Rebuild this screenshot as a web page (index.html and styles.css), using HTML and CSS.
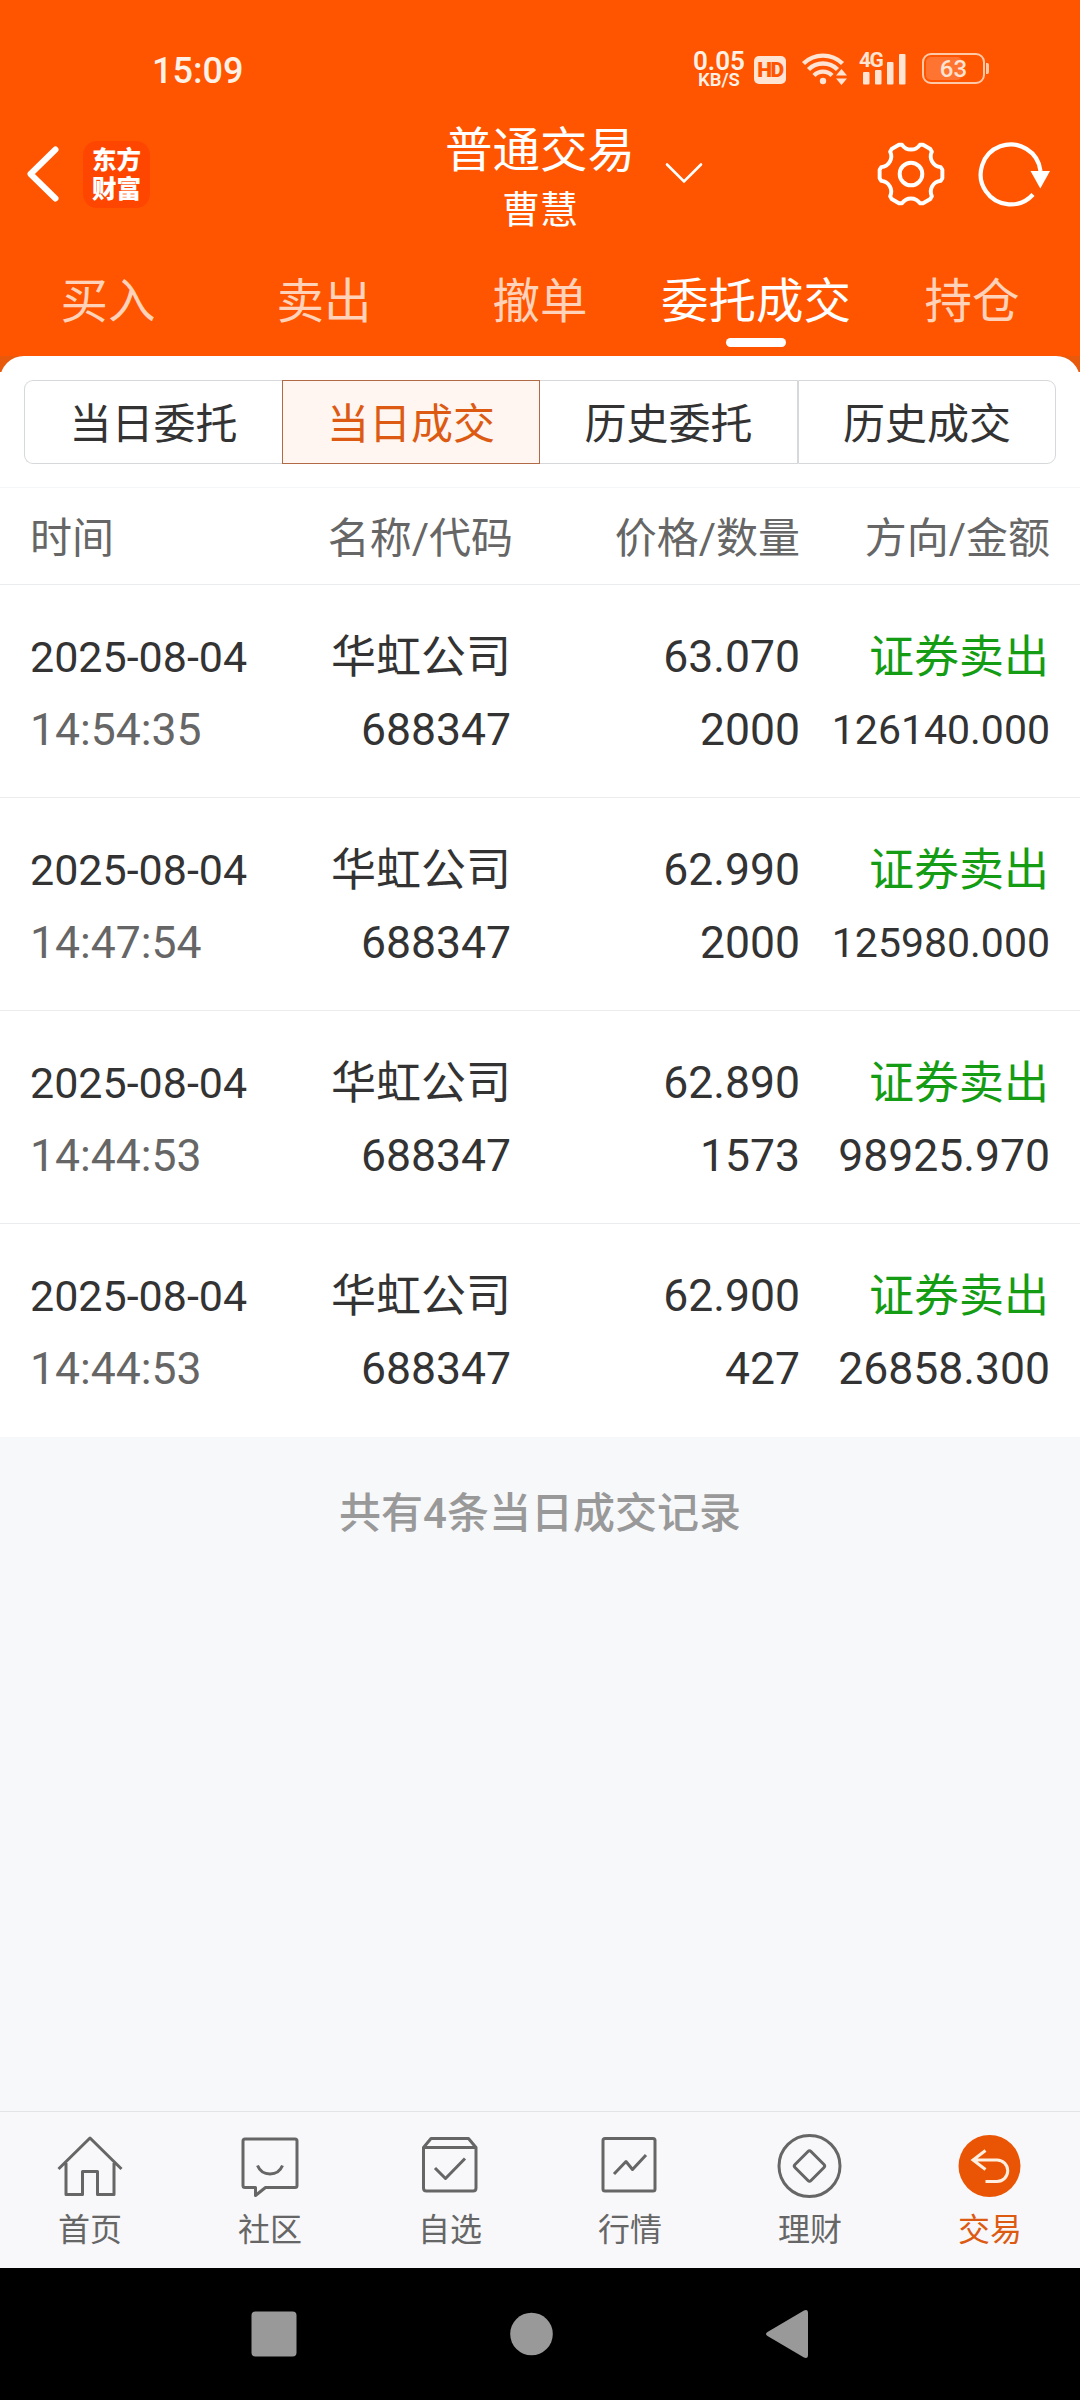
FILE: index.html
```html
<!DOCTYPE html>
<html lang="zh-CN">
<head>
<meta charset="utf-8">
<title>当日成交</title>
<link rel="stylesheet" href="styles.css">
</head>
<body>
<div class="screen">
  <header class="top">
    <div class="status">
      <span class="clock">15:09</span>
      <div class="status-icons">
        <div class="speed"><span class="speed-num">0.05</span><span class="speed-unit">KB/S</span></div>
        <span class="hd">HD</span>
        <svg class="wifi" width="46" height="36" viewBox="0 0 46 36">
          <g fill="none" stroke="#ffe3d3" stroke-width="4.400">
            <path d="M2.5 13.5A28 28 0 0 1 41.5 13.5"/>
            <path d="M7.5 19.5A20.500 20.500 0 0 1 36.500 19.5"/>
            <path d="M13 25.500A12.500 12.500 0 0 1 31 25.500"/>
          </g>
          <circle cx="22" cy="31" r="3.200" fill="#ffe3d3"/>
          <path d="M35 25.500L40.500 19L46 25.500zM35 28.500H46L40.500 35z" fill="#ffe3d3"/>
        </svg>
        <div class="signal">
          <span class="net">4G</span>
          <svg width="48" height="34" viewBox="0 0 48 34" fill="#ffe3d3">
            <rect x="4" y="21" width="6.500" height="12.500" rx="1"/><rect x="16" y="19" width="6.500" height="14.500" rx="1"/><rect x="28" y="11" width="6.500" height="22.500" rx="1"/><rect x="40" y="3" width="6.500" height="30.500" rx="1"/>
          </svg>
        </div>
        <div class="battery"><span class="battery-level"></span><span class="battery-text">63</span></div>
        <span class="battery-nub"></span>
      </div>
    </div>
    <div class="titlebar">
      <div class="title-left">
        <svg width="36" height="60" viewBox="0 0 36 60"><path d="M31.500 5.500L6.500 30L31.500 54.500" fill="none" stroke="#fff" stroke-width="6" stroke-linecap="round" stroke-linejoin="round"/></svg>
        <div class="logo"><span>东方</span><span>财富</span></div>
      </div>
      <div class="title-center">
        <span class="title">普通交易</span>
        <span class="user">曹慧</span>
      </div>
      <div class="title-right">
        <svg class="drop" width="40" height="24" viewBox="0 0 40 24"><path d="M3 3.500L20 20.500L37 3.500" fill="none" stroke="#fff" stroke-width="2.600" stroke-linecap="round"/></svg>
        <svg class="gear" width="70" height="70" viewBox="-35 -35 70 70" fill="none" stroke="#fff" stroke-width="4" stroke-linejoin="round">
          <path transform="scale(.98)" d="M30.400 7A11 11 0 0 0 21.300 22.800L19.700 25.500L12.300 29.800L9.100 29.800A11 11 0 0 0 -9.100 29.800L-12.300 29.800L-19.700 25.500L-21.300 22.800A11 11 0 0 0 -30.400 7L-32 4.300V-4.300L-30.400 -7A11 11 0 0 0 -21.300 -22.800L-19.700 -25.500L-12.300 -29.800L-9.100 -29.800A11 11 0 0 0 9.100 -29.800L12.300 -29.800L19.700 -25.500L21.300 -22.800A11 11 0 0 0 30.400 -7L32 -4.300V4.300z"/>
          <circle r="11.300"/>
        </svg>
        <svg class="refresh" width="74" height="70" viewBox="-34 -35 74 70"><path d="M22 20.500A30 30 0 1 1 29.500 -3" fill="none" stroke="#fff" stroke-width="4.200"/><path d="M19.500 -3H39L29.300 14.500z" fill="#fff"/></svg>
      </div>
    </div>
    <nav class="tabs">
      <span class="tab">买入</span>
      <span class="tab">卖出</span>
      <span class="tab">撤单</span>
      <span class="tab tab-on">委托成交</span>
      <span class="tab">持仓</span>
    </nav>
  </header>

  <main class="sheet-back">
    <section class="sheet">
      <div class="segments">
        <span class="seg seg-first">当日委托</span>
        <span class="seg seg-on">当日成交</span>
        <span class="seg seg-mid">历史委托</span>
        <span class="seg seg-last">历史成交</span>
      </div>
      <div class="cols head"><span>时间</span><span>名称/代码</span><span>价格/数量</span><span>方向/金额</span></div>
      <div class="cols row">
        <span class="date">2025-08-04</span><span class="name">华虹公司</span><span>63.070</span><span class="sell">证券卖出</span>
        <span class="time">14:54:35</span><span>688347</span><span>2000</span><span class="long">126140.000</span>
      </div>
      <div class="cols row">
        <span class="date">2025-08-04</span><span class="name">华虹公司</span><span>62.990</span><span class="sell">证券卖出</span>
        <span class="time">14:47:54</span><span>688347</span><span>2000</span><span class="long">125980.000</span>
      </div>
      <div class="cols row">
        <span class="date">2025-08-04</span><span class="name">华虹公司</span><span>62.890</span><span class="sell">证券卖出</span>
        <span class="time">14:44:53</span><span>688347</span><span>1573</span><span>98925.970</span>
      </div>
      <div class="cols row">
        <span class="date">2025-08-04</span><span class="name">华虹公司</span><span>62.900</span><span class="sell">证券卖出</span>
        <span class="time">14:44:53</span><span>688347</span><span>427</span><span>26858.300</span>
      </div>
    </section>
  </main>
  <p class="summary">共有4条当日成交记录</p>

  <nav class="bottom">
    <div class="item">
      <svg width="70" height="70" viewBox="0 0 70 70"><path d="M3.500 37L35 6L66.500 37M11 31V62.500H27.500V39.500H42.500V62.500H59V31"/></svg>
      <span>首页</span>
    </div>
    <div class="item">
      <svg width="70" height="70" viewBox="0 0 70 70"><path d="M10 7H60Q62 7 62 9V53.500Q62 55.500 60 55.500H30.500L20.500 63.500V55.500H10Q8 55.500 8 53.500V9Q8 7 10 7zM22.500 33.500Q26 42 35 42T47.500 33.500"/></svg>
      <span>社区</span>
    </div>
    <div class="item">
      <svg width="70" height="70" viewBox="0 0 70 70"><path d="M8.500 15.500L16 6.500H53.500L61 15.500V56Q61 59 58 59H11.500Q8.500 59 8.500 56zM8.500 15.500H61M20 36L30.500 46.500L50 26.500"/></svg>
      <span>自选</span>
    </div>
    <div class="item">
      <svg width="70" height="70" viewBox="0 0 70 70"><path d="M10 6.500H58Q60 6.500 60 8.500V57Q60 59 58 59H10Q8 59 8 57V8.500Q8 6.500 10 6.500zM19 42L31 29.500L37.500 37.500L51 23"/></svg>
      <span>行情</span>
    </div>
    <div class="item">
      <svg width="70" height="70" viewBox="0 0 70 70"><circle cx="34.500" cy="34" r="30.500"/><path d="M33 19.500Q34.500 18 36 19.500L49 32.500Q50.500 34 49 35.500L36 48.500Q34.500 50 33 48.500L20 35.500Q18.500 34 20 32.500z"/></svg>
      <span>理财</span>
    </div>
    <div class="item item-on">
      <svg width="70" height="70" viewBox="0 0 70 70"><circle class="disc" cx="34.500" cy="34" r="31"/><path class="arrow" d="M30.500 18.500L18 28L30.500 37.500M18 28H42A10.500 10.500 0 0 1 42 49.500H30.500"/></svg>
      <span>交易</span>
    </div>
  </nav>

  <div class="sysnav">
    <svg width="60" height="60" viewBox="0 0 60 60"><rect x="7.500" y="7.500" width="45" height="45" rx="4"/></svg>
    <svg width="60" height="60" viewBox="0 0 60 60"><circle cx="30.500" cy="30" r="21.300"/></svg>
    <svg width="60" height="60" viewBox="0 0 60 60"><path d="M9.500 28Q6.500 30 9.500 32L46 53.500Q50 55 50 51V9Q50 5 46 6.500z"/></svg>
  </div>
</div>
</body>
</html>
```
FILE: styles.css
```css
* { box-sizing: border-box; }
body {
  margin: 0;
  font-family: Roboto, "Noto Sans CJK SC", sans-serif;
  color: #333;
}
.screen {
  width: 1080px;
  height: 2400px;
  display: flex;
  flex-direction: column;
  background: #f7f8fa;
  overflow: hidden;
}
svg { display: block; flex: none; }

/* header */
.top {
  height: 356px;
  background: #ff5500;
  color: #fff;
  display: flex;
  flex-direction: column;
}
.status {
  height: 120px;
  padding: 50px 91px 0 152px;
  display: flex;
  justify-content: space-between;
  align-items: flex-start;
}
.clock { font-size: 36px; font-weight: 500; line-height: 43px; color: #fff1e6; }
.status-icons { display: flex; height: 40px; }
.speed {
  width: 52px;
  margin-right: 9px;
  display: flex;
  flex-direction: column;
  align-items: center;
  color: #fff1e6;
}
.speed-num { font-size: 26px; line-height: 22px; font-weight: 600; }
.speed-unit { font-size: 18.500px; line-height: 17px; font-weight: 600; }
.hd {
  width: 32px;
  height: 28px;
  margin: 6px 16px 0 0;
  border-radius: 5px;
  background: #ffe3d3;
  color: #ff5500;
  font-size: 21px;
  font-weight: 900;
  line-height: 28px;
  text-align: center;
  letter-spacing: -1.500px;
}
.wifi { margin: 0 12px 0 -1px; }
.signal { position: relative; width: 48px; padding-top: 1px; margin-right: 15px; }
.net {
  position: absolute;
  left: 0;
  top: 0;
  font-size: 21px;
  font-weight: 700;
  line-height: 21px;
  letter-spacing: -1.500px;
  color: #ffe3d3;
}
.battery {
  position: relative;
  width: 63px;
  height: 31px;
  margin-top: 3px;
  border: 2.500px solid #ffc9a8;
  border-radius: 9px;
  text-align: center;
}
.battery-level {
  position: absolute;
  left: 2px;
  top: 2px;
  width: 36px;
  height: 23px;
  border-radius: 5px;
  background: #ff7430;
}
.battery-text { position: relative; font-size: 24px; line-height: 28px; display: block; color: #ffe3d3; font-weight: 500; }
.battery-nub { width: 3px; height: 11px; margin: 13px 0 0 1px; border-radius: 0 2px 2px 0; background: #ffc9a8; }

.titlebar {
  height: 120px;
  display: grid;
  grid-template-columns: 440px 200px 440px;
}
.title-left { display: flex; padding-left: 24px; }
.title-left svg { margin-top: 24px; }
.logo {
  width: 67px;
  height: 67px;
  margin: 21px 0 0 23px;
  padding-top: 5px;
  border-radius: 14px;
  background: #ff4600;
  display: flex;
  flex-direction: column;
  align-items: center;
  font-size: 24.500px;
  font-weight: 900;
  line-height: 29px;
}
.title-center { display: flex; flex-direction: column; align-items: center; padding-top: 3px; }
.title { font-size: 47.500px; line-height: 56px; }
.user { font-size: 38px; line-height: 62px; }
.title-right { display: flex; padding-left: 24px; }
.drop { margin-top: 41px; }
.gear { margin: 19px 0 0 172px; }
.refresh { margin: 19px 0 0 31px; }

.tabs { height: 116px; display: grid; grid-template-columns: repeat(5, 216px); }
.tab {
  display: flex;
  flex-direction: column;
  align-items: center;
  padding-top: 32px;
  font-size: 47.500px;
  line-height: 60px;
  color: #ffd2b9;
}
.tab-on { color: #fff; }
.tab-on::after {
  content: "";
  width: 60px;
  height: 9px;
  margin-top: 6px;
  border-radius: 4.500px;
  background: #fff;
}

/* records */
.sheet-back { background: linear-gradient(#e9590c 16px, #fff 16px); }
.sheet { background: #fff; border-radius: 24px 24px 0 0; padding-top: 24px; }
.segments {
  height: 84px;
  margin: 0 24px 23px;
  display: grid;
  grid-template-columns: repeat(4, 258px);
  grid-template-rows: 84px;
}
.seg {
  border: 1px solid #d6d8da;
  padding-top: 2px;
  font-size: 42px;
  line-height: 84px;
  text-align: center;
}
.seg-first { border-radius: 9px 0 0 9px; border-right: 0; }
.seg-on { background: #fff6f2; border-color: #b06a45; color: #dc5a12; }
.seg-mid { border-left: 0; }
.seg-last { border-radius: 0 9px 9px 0; }
.cols {
  display: grid;
  grid-template-columns: 230px 251px 289px 250px;
  padding: 0 30px;
  border-bottom: 1px solid #ebecee;
  text-align: right;
}
.head {
  height: 98px;
  border-top: 1px solid #f5f6f7;
  font-size: 42px;
  line-height: 101px;
  color: #666;
}
.head span:nth-child(2) { margin-right: -2px; }
.head span:first-child, .date, .time { text-align: left; }
.row {
  height: 213px;
  padding-top: 36px;
  grid-auto-rows: 73px;
  font-size: 44.500px;
  line-height: 73px;
}
.row:last-child { border-bottom: 0; }
.date { font-size: 43px; }
.time { color: #666; }
.long { font-size: 41px; }
.name, .sell { font-size: 45px; line-height: 74px; }
.sell { color: #149c14; margin-right: 1px; }
.summary {
  flex: 1;
  margin: 0;
  padding-top: 47px;
  text-align: center;
  font-size: 42px;
  font-weight: 500;
  line-height: 60px;
  color: #999;
}

/* app navigation */
.bottom {
  height: 157px;
  border-top: 1px solid #e3e4e6;
  background: #f8f8fa;
  display: grid;
  grid-template-columns: repeat(6, 180px);
}
.item {
  display: flex;
  flex-direction: column;
  align-items: center;
  padding-top: 20px;
  font-size: 32px;
  line-height: 40px;
  color: #666;
}
.item svg { fill: none; stroke: #666; stroke-width: 3; stroke-linejoin: round; stroke-linecap: butt; }
.item span { margin-top: 8px; }
.item-on { color: #dc5a12; }
.item svg .disc { fill: #e95504; stroke: none; }
.item svg .arrow { stroke: #ffefe0; stroke-linejoin: miter; }

/* system navigation */
.sysnav {
  height: 132px;
  padding: 0 262px 0 244px;
  background: #000;
  display: flex;
  justify-content: space-between;
  align-items: center;
}
.sysnav svg { fill: #999; }
```
